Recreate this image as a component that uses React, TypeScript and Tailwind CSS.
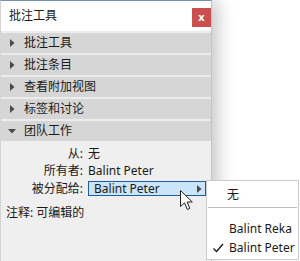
import React from 'react';

const font = { fontFamily: '"Noto Sans", "Noto Sans CJK SC", sans-serif' };

const sections = ['批注工具', '批注条目', '查看附加视图', '标签和讨论'];

const RightTri = () => (
  <svg width="5" height="8" viewBox="0 0 5 8" className="shrink-0">
    <path d="M0 0 L4.5 4 L0 8 Z" fill="#4a4a4a" />
  </svg>
);

const DownTri = () => (
  <svg width="8" height="5" viewBox="0 0 8 5" className="shrink-0">
    <path d="M0 0 L8 0 L4 4.5 Z" fill="#4a4a4a" />
  </svg>
);

const Header: React.FC<{ label: string; open?: boolean }> = ({ label, open }) => (
  <div className="h-[20px] bg-[#d6d6d6] flex items-center text-[12px] text-[#1a1a1a]">
    <div className="w-[23px] flex justify-center pl-[1px] pr-[2px]">{open ? <DownTri /> : <RightTri />}</div>
    <span>{label}</span>
  </div>
);

const App: React.FC = () => {
  return (
    <div className="relative w-[300px] h-[261px] bg-white overflow-hidden" style={font}>
      <div className="w-[212px] h-[261px] flex flex-col bg-[#efefef] border-t border-[#7391ab] border-l border-l-[#d4d4d4] border-r border-r-[#c4c4c4] shadow-[6px_0_16px_rgba(0,0,0,0.22)]">
        <div className="h-[30px] bg-white flex items-center justify-between pl-[8px] pr-[0px]">
          <span className="text-[12px] text-[#1a1a1a]">批注工具</span>
          <div className="w-[19px] h-[19px] mt-[2px] bg-[#c9504e] flex items-center justify-center text-white text-[11px] font-bold leading-none pb-[2px]">x</div>
        </div>
        <div className="flex flex-col gap-[2px] pt-[2px] bg-[#ececec]">
          {sections.map(s => (
            <Header key={s} label={s} />
          ))}
          <Header label="团队工作" open />
        </div>
        <div className="pt-[4px] text-[12px] text-[#1a1a1a]">
          <div className="grid grid-cols-[82px_1fr] gap-x-[5px]">
            <div className="h-[17px] flex items-center justify-end">从:</div>
            <div className="h-[17px] flex items-center">无</div>
            <div className="h-[17px] flex items-center justify-end">所有者:</div>
            <div className="h-[17px] flex items-center">Balint Peter</div>
            <div className="h-[18px] mt-[1px] flex items-center justify-end">被分配给:</div>
            <div className="h-[15px] mt-[2px] w-[118px] border border-[#1c5f9f] bg-[#cce4f7] flex items-center justify-between pl-[5px] pr-[3px]">
              <span>Balint Peter</span>
              <RightTri />
            </div>
          </div>
          <div className="pl-[5px] mt-[6px] h-[17px] flex items-center">注释: 可编辑的</div>
        </div>
      </div>

      <div className="absolute left-[206px] top-[180px] w-[93px] h-[80px] bg-white border border-[#cccccc] text-[12px] text-[#1a1a1a] flex flex-col">
        <div className="h-[26px] flex items-center pl-[20px] pt-[1px]">无</div>
        <div className="mx-[1px] h-px bg-[#bdbdbd]" />
        <div className="h-[11px]" />
        <div className="h-[19px] flex items-center pl-[22px]">Balint Reka</div>
        <div className="h-[19px] flex items-center">
          <svg width="22" height="12" viewBox="0 0 22 12" className="shrink-0">
            <path d="M6.5 6.5 L9.5 9.5 L16 2" stroke="#1a1a1a" strokeWidth="1.4" fill="none" />
          </svg>
          <span>Balint Peter</span>
        </div>
      </div>

      <svg className="absolute left-[180px] top-[190px]" width="14" height="22" viewBox="0 0 14 22">
        <path d="M0.5 0.5 L0.5 16.5 L4.5 12.8 L7.3 19.5 L9.8 18.4 L7.1 12 L12.3 12 Z" fill="white" stroke="#222" strokeWidth="1" strokeLinejoin="round" />
      </svg>
    </div>
  );
};

export default App;
